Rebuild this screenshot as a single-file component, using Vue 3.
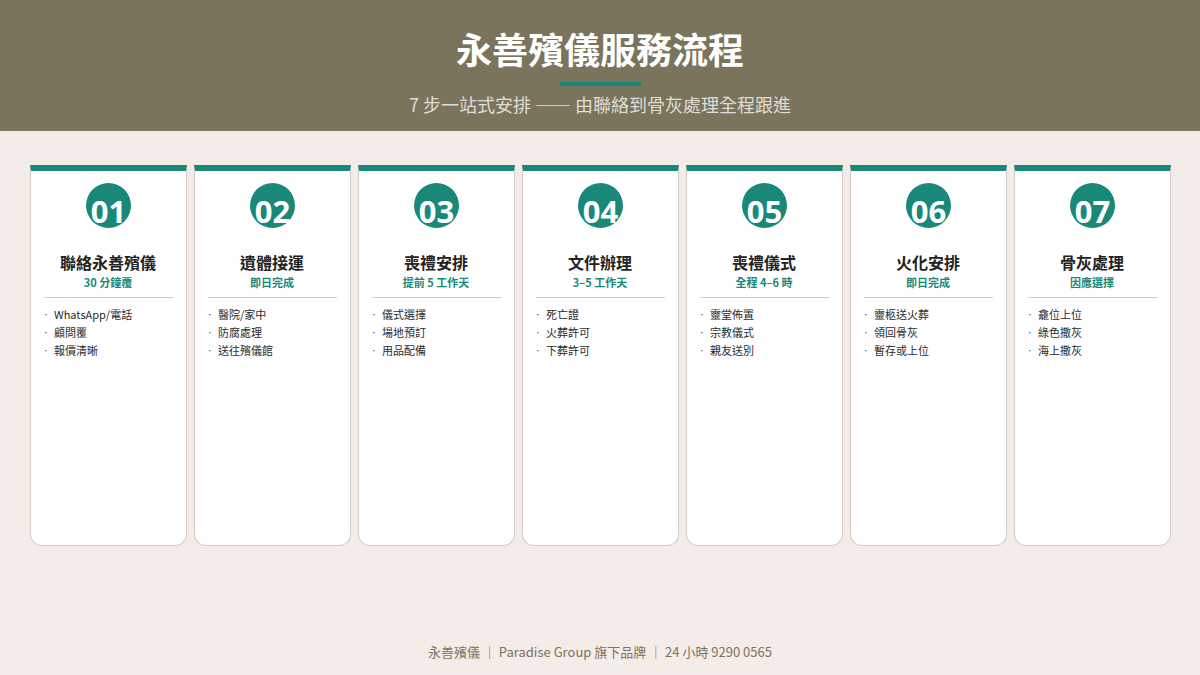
<script setup>
const steps = [
  { no: '01', title: '聯絡永善殯儀', time: '30 分鐘覆', items: ['WhatsApp/電話', '顧問覆', '報價清晰'] },
  { no: '02', title: '遺體接運', time: '即日完成', items: ['醫院/家中', '防腐處理', '送往殯儀館'] },
  { no: '03', title: '喪禮安排', time: '提前 5 工作天', items: ['儀式選擇', '場地預訂', '用品配備'] },
  { no: '04', title: '文件辦理', time: '3–5 工作天', items: ['死亡證', '火葬許可', '下葬許可'] },
  { no: '05', title: '喪禮儀式', time: '全程 4–6 時', items: ['靈堂佈置', '宗教儀式', '親友送別'] },
  { no: '06', title: '火化安排', time: '即日完成', items: ['靈柩送火葬', '領回骨灰', '暫存或上位'] },
  { no: '07', title: '骨灰處理', time: '因應選擇', items: ['龕位上位', '綠色撒灰', '海上撒灰'] }
]
</script>

<template>
  <div class="page" lang="zh-HK">
    <header class="header">
      <h1>永善殯儀服務流程</h1>
      <div class="accent"></div>
      <p>7 步一站式安排 —— 由聯絡到骨灰處理全程跟進</p>
    </header>

    <main class="steps">
      <section v-for="step in steps" :key="step.no" class="card">
        <div class="num">{{ step.no }}</div>
        <h2>{{ step.title }}</h2>
        <div class="time">{{ step.time }}</div>
        <div class="rule"></div>
        <ul>
          <li v-for="item in step.items" :key="item">{{ item }}</li>
        </ul>
      </section>
    </main>

    <footer class="footer">永善殯儀 ｜ Paradise Group 旗下品牌 ｜ 24 小時 9290 0565</footer>
  </div>
</template>

<style>
html, body {
  margin: 0;
  background: #f4ece8;
}
</style>

<style scoped>
.page {
  width: 1200px;
  height: 675px;
  display: flex;
  flex-direction: column;
  background: #f4ece8;
  font-family: "Noto Sans CJK TC", "Noto Sans", sans-serif;
  overflow: hidden;
}

.header {
  height: 131px;
  flex: none;
  box-sizing: border-box;
  padding-top: 23px;
  background: #7a745c;
  display: flex;
  flex-direction: column;
  align-items: center;
}

.header h1 {
  margin: 0;
  height: 50px;
  line-height: 50px;
  font-size: 36px;
  font-weight: 700;
  color: #fff;
}

.accent {
  width: 81px;
  height: 4px;
  margin-top: 9px;
  background: #1a8878;
}

.header p {
  margin: 5px 0 0;
  font-size: 18px;
  line-height: 26px;
  color: #e0ddd6;
}

.steps {
  height: 381px;
  flex: none;
  margin: 34px 0 0 30px;
  display: grid;
  grid-template-columns: repeat(7, 157px);
  gap: 7px;
}

.card {
  background: #fff;
  border: 1px solid #d4ccc4;
  border-top: 6px solid #1a8878;
  border-radius: 0 0 12px 12px;
  box-sizing: border-box;
  display: flex;
  flex-direction: column;
  align-items: center;
  padding: 12px 13px 0;
}

.num {
  width: 45px;
  height: 45px;
  flex: none;
  border-radius: 50%;
  background: #1a8878;
  color: #fff;
  font-family: "Noto Sans", sans-serif;
  font-size: 31px;
  font-weight: 700;
  line-height: 56px;
  text-align: center;
}

.card h2 {
  margin: 22px 0 0 -1px;
  font-size: 16px;
  line-height: 24px;
  font-weight: 700;
  color: #222;
}

.time {
  margin-left: -1px;
  font-size: 11px;
  line-height: 16px;
  font-weight: 700;
  color: #1a8878;
}

.rule {
  width: 100%;
  height: 1px;
  margin-top: 7px;
  background: #d4ccc4;
}

.card ul {
  list-style: none;
  margin: 7px 0 0;
  padding: 0;
  width: 100%;
}

.card li {
  position: relative;
  padding-left: 10px;
  font-size: 11px;
  line-height: 18px;
  color: #2b2b2b;
}

.card li::before {
  content: "·";
  position: absolute;
  left: 0;
  font-family: "Liberation Sans", sans-serif;
}

.footer {
  margin-top: auto;
  padding-bottom: 13px;
  text-align: center;
  font-size: 13px;
  line-height: 20px;
  color: #7a745c;
}
</style>
